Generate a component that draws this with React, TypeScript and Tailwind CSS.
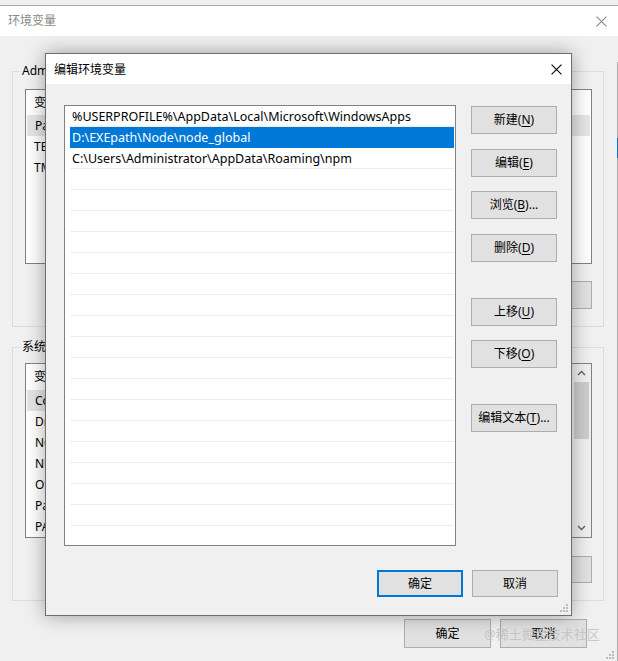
import React from "react";

const FONT = {
  fontFamily: "'Noto Sans', 'Noto Sans CJK SC', sans-serif",
};

function Btn({
  label,
  k,
  tail = "",
  className = "",
  def = false,
}: {
  label: string;
  k?: string;
  tail?: string;
  className?: string;
  def?: boolean;
}) {
  return (
    <div
      className={
        "flex items-center justify-center bg-[#e1e1e1] text-[12px] text-black " +
        (def ? "border-2 border-[#0078d7] " : "border border-[#adadad] ") +
        className
      }
    >
      <span>
        {label}
        {k ? (
          <>
            (<span className="underline underline-offset-2">{k}</span>)
          </>
        ) : null}
        {tail}
      </span>
    </div>
  );
}

const dialogRows = [
  "%USERPROFILE%\\AppData\\Local\\Microsoft\\WindowsApps",
  "D:\\EXEpath\\Node\\node_global",
  "C:\\Users\\Administrator\\AppData\\Roaming\\npm",
];

function CloseX({ color, size }: { color: string; size: number }) {
  return (
    <svg width={size} height={size} viewBox="0 0 10 10">
      <path d="M0.5 0.5 L9.5 9.5 M9.5 0.5 L0.5 9.5" stroke={color} strokeWidth="1" />
    </svg>
  );
}

export default function App() {
  const empty = Array.from({ length: 18 });
  return (
    <div
      className="relative w-[618px] h-[661px] overflow-hidden bg-[#f0f0f0] text-black"
      style={FONT}
    >
      {/* Background window */}
      <div className="absolute left-0 top-[5px] w-[618px] h-[680px] border-t border-[#a8a8a8] bg-[#f0f0f0]">
        <div className="h-[30px] bg-white flex items-center justify-between pl-[8px] pr-[11px]">
          <span className="text-[12px] text-[#8a8a8a]">环境变量</span>
          <CloseX color="#8a8a8a" size={11} />
        </div>
        <div className="pl-[12px] pr-[15px] pt-[35px]">
          {/* group 1 */}
          <div className="relative border border-[#dcdcdc] w-[592px] h-[256px] pl-[12px] pt-[17px]">
            <span className="absolute left-[7px] top-[-10px] bg-[#f0f0f0] px-[2px] text-[12px]">
              Administrator 的用户变量(U)
            </span>
            <div className="w-[567px] h-[175px] border border-[#828282] bg-white text-[12px]">
              <div className="h-[25px] flex items-center pl-[8px]">变量</div>
              <div className="h-[21px] flex items-center pl-[8px] bg-[#e5e5e5] mx-[1px]">Path</div>
              <div className="h-[21px] flex items-center pl-[8px]">TEMP</div>
              <div className="h-[21px] flex items-center pl-[8px]">TMP</div>
            </div>
            <div className="flex justify-end gap-[9px] w-[567px] mt-[17px]">
              <Btn label="新建" k="N" className="w-[86px] h-[28px]" />
              <Btn label="编辑" k="E" className="w-[86px] h-[28px]" />
              <Btn label="删除" k="D" className="w-[86px] h-[28px]" />
            </div>
          </div>
          {/* group 2 */}
          <div className="relative mt-[20px] border border-[#dcdcdc] w-[592px] h-[254px] pl-[12px] pt-[15px]">
            <span className="absolute left-[7px] top-[-10px] bg-[#f0f0f0] px-[2px] text-[12px]">
              系统变量(S)
            </span>
            <div className="flex w-[567px] h-[175px] border border-[#828282] bg-white text-[12px]">
              <div className="flex-1">
                <div className="h-[26px] flex items-center pl-[8px]">变量</div>
                {["ComSpec", "DriverData", "NODE_PATH", "NUMBER_OF_PROCESSORS", "OS", "Path", "PATHEXT"].map(
                  (r, i) => (
                    <div
                      key={r}
                      className={
                        "h-[21px] flex items-center pl-[8px] mx-[1px] " + (i === 0 ? "bg-[#e5e5e5]" : "")
                      }
                    >
                      {r}
                    </div>
                  )
                )}
              </div>
              <div className="w-[19px] bg-[#f0f0f0] flex flex-col items-center">
                <span className="h-[18px] flex items-center">
                  <svg width="9" height="6" viewBox="0 0 9 6">
                    <path d="M1 5 L4.5 1.5 L8 5" stroke="#606060" strokeWidth="1.4" fill="none" />
                  </svg>
                </span>
                <div className="w-[15px] h-[57px] bg-[#cdcdcd]" />
                <div className="flex-1" />
                <span className="h-[18px] flex items-center">
                  <svg width="9" height="6" viewBox="0 0 9 6">
                    <path d="M1 1 L4.5 4.5 L8 1" stroke="#606060" strokeWidth="1.4" fill="none" />
                  </svg>
                </span>
              </div>
            </div>
            <div className="flex justify-end gap-[9px] w-[567px] mt-[18px]">
              <Btn label="新建" k="W" className="w-[86px] h-[27px]" />
              <Btn label="编辑" k="I" className="w-[86px] h-[27px]" />
              <Btn label="删除" k="L" className="w-[86px] h-[27px]" />
            </div>
          </div>
          <div className="flex justify-end gap-[9px] w-[575px] mt-[18px]">
            <Btn label="确定" className="w-[87px] h-[29px]" />
            <Btn label="取消" className="w-[87px] h-[29px]" />
          </div>
        </div>
        {/* grip */}
        <div className="absolute left-[606px] top-[645px] grid grid-cols-3 gap-[1px]">
          {[0, 0, 1, 0, 1, 1, 1, 1, 1].map((v, i) => (
            <span key={i} className={"w-[2px] h-[2px] " + (v ? "bg-[#bdbdbd]" : "")} />
          ))}
        </div>
      </div>
      <div className="absolute left-[617px] top-[62px] w-[1px] h-[600px] bg-[#b0b0b0]" />
      <div className="absolute left-[617px] top-[138px] w-[1px] h-[20px] bg-[#0078d7]" />

      {/* watermark */}
      <div className="absolute left-[484px] top-[625px] text-[13px] text-[#c4c4c4] opacity-90">
        @稀土掘金技术社区
      </div>

      {/* Dialog */}
      <div className="absolute left-[45px] top-[53px] w-[527px] h-[563px] border border-[#6e6e6e] bg-[#f0f0f0] shadow-[0_0_18px_rgba(0,0,0,0.35)]">
        <div className="h-[30px] bg-white flex items-center justify-between pl-[8px] pr-[9px] pt-[1px]">
          <span className="text-[12px]">编辑环境变量</span>
          <CloseX color="#000" size={11} />
        </div>
        <div className="flex pl-[18px] pt-[21px]">
          <div className="w-[392px] h-[441px] border border-[#828282] bg-white pl-[5px] pr-[1px] text-[12.5px] overflow-hidden">
            {dialogRows.map((r, i) => (
              <div
                key={r}
                className={
                  "h-[21px] flex items-center pl-[2px] pt-[2px] border-b " +
                  (i === 1 ? "bg-[#0078d7] text-white border-[#0078d7]" : "border-[#ededed]")
                }
              >
                {r}
              </div>
            ))}
            {empty.map((_, i) => (
              <div key={i} className="h-[21px] border-b border-[#ededed]" />
            ))}
          </div>
          <div className="ml-[15px] w-[86px] flex flex-col pt-[1px]">
            <Btn label="新建" k="N" className="h-[28px]" />
            <Btn label="编辑" k="E" className="h-[28px] mt-[15px]" />
            <Btn label="浏览" k="B" tail="..." className="h-[28px] mt-[14px]" />
            <Btn label="删除" k="D" className="h-[28px] mt-[15px]" />
            <Btn label="上移" k="U" className="h-[28px] mt-[36px]" />
            <Btn label="下移" k="O" className="h-[28px] mt-[14px]" />
            <Btn label="编辑文本" k="T" tail="..." className="h-[28px] mt-[36px]" />
          </div>
        </div>
        <div className="flex justify-end gap-[9px] pr-[13px] mt-[24px]">
          <Btn label="确定" def className="w-[86px] h-[27px]" />
          <Btn label="取消" className="w-[86px] h-[27px]" />
        </div>
        <div className="absolute right-[3px] bottom-[3px] grid grid-cols-3 gap-[1px]">
          {[0, 0, 1, 0, 1, 1, 1, 1, 1].map((v, i) => (
            <span key={i} className={"w-[2px] h-[2px] " + (v ? "bg-[#bdbdbd]" : "")} />
          ))}
        </div>
      </div>
    </div>
  );
}
